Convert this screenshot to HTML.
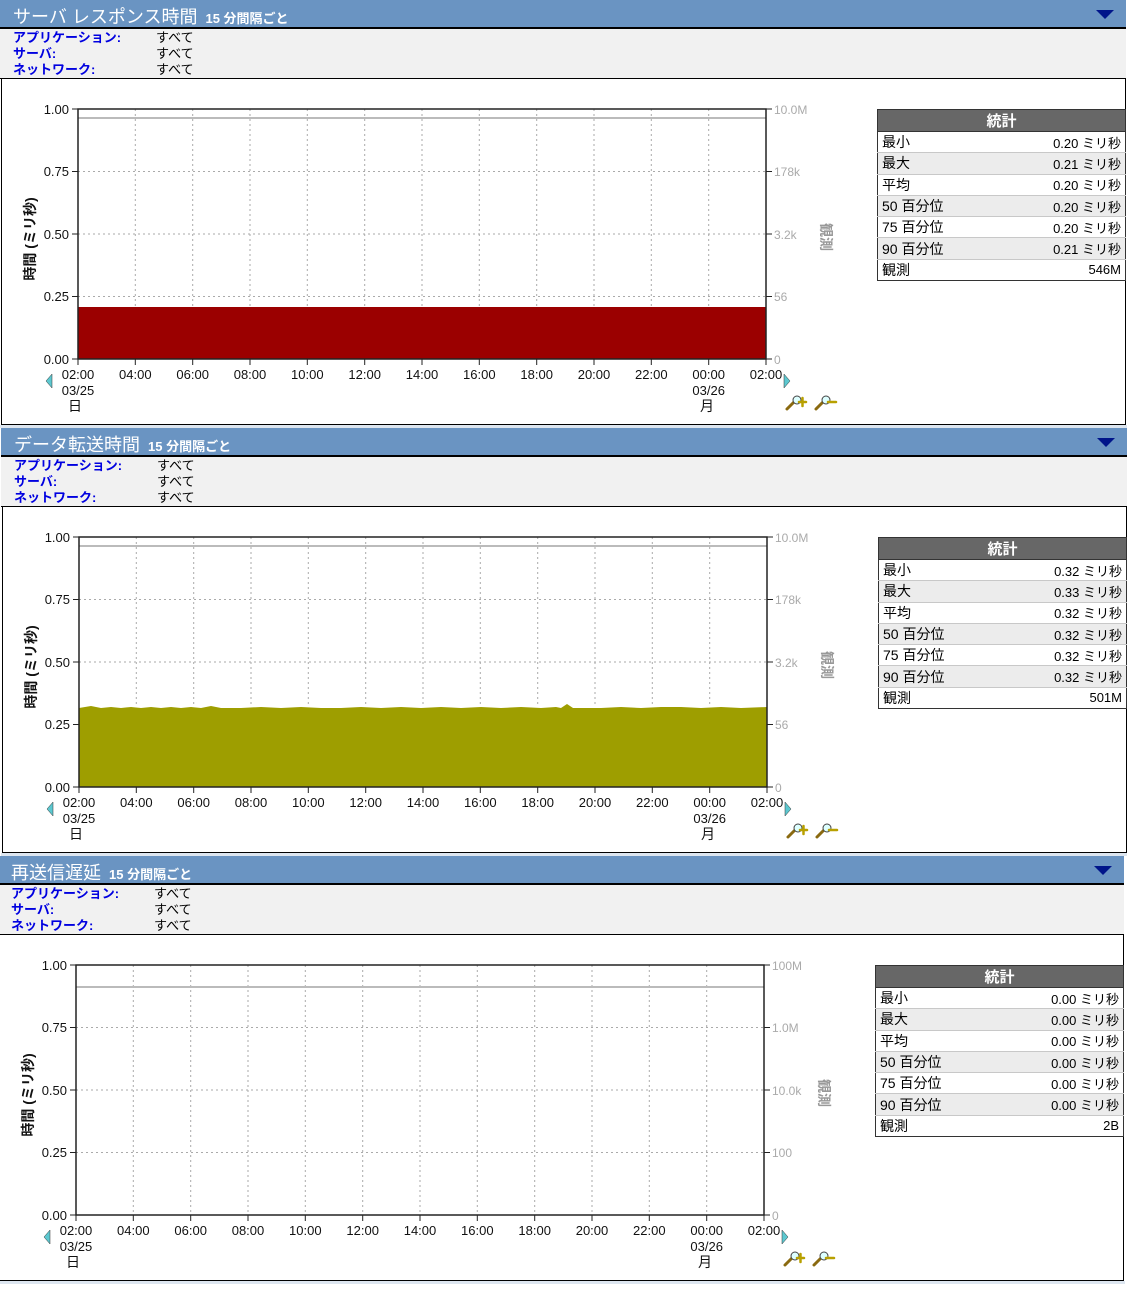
<!DOCTYPE html>
<html><head><meta charset="utf-8">
<style>
*{margin:0;padding:0;box-sizing:border-box}
body{width:1127px;height:1291px;background:#fff;position:relative;overflow:hidden;font-family:"Liberation Sans","Noto Sans CJK JP",sans-serif}
.p{position:absolute;width:1126px;height:427px}
.hd{position:absolute;left:0;top:0;width:1126px;height:29px;background:#6a94c2;border-bottom:2px solid #000;color:#fff}
.hd .t{position:absolute;left:13px;top:3px;font-size:18px}
.hd .s{font-size:13px;font-weight:bold;margin-left:8px}
.hd .a{position:absolute;right:12px;top:10px;width:0;height:0;border-left:9px solid transparent;border-right:9px solid transparent;border-top:9px solid #00158a}
.inf{position:absolute;left:0;top:29px;width:1126px;height:50px;background:#f1f1f1;border-bottom:1px solid #000;font-size:13px;line-height:16px;padding-top:1px}
.inf div{position:relative;height:16px}
.inf b{position:absolute;left:13px;color:#0000e0;font-weight:bold}
.inf span{position:absolute;left:156px;color:#000}
.ch{position:absolute;left:1px;top:79px;width:1125px;height:346px;border:1px solid #000;border-top:none;background:#fff}
.gap{position:absolute;left:0;top:425px;width:1127px;height:3px;background:#dde6f0}
svg{position:absolute;left:0;top:0}
.st{position:absolute;left:877px;top:109px;width:249px;border:1px solid #333;font-size:14px;border-collapse:collapse}
.st th{background:#676767;color:#fff;height:22px;font-size:15px;border-bottom:1px solid #333}
.st td{height:21.3px;padding:0 4px;border-top:1px solid #c8c8c8}
.st tr:nth-child(odd) td{background:#ececec}
.st td:last-child{text-align:right;font-size:13px}
</style></head><body>

<!-- PANEL 1 -->
<div class="p" style="left:0;top:0">
<div class="hd"><div class="t">サーバ レスポンス時間<span class="s">15 分間隔ごと</span></div><div class="a"></div></div>
<div class="inf"><div><b>アプリケーション:</b><span>すべて</span></div><div><b>サーバ:</b><span>すべて</span></div><div><b>ネットワーク:</b><span>すべて</span></div></div>
<div class="ch"></div><div class="gap"></div>
<svg width="1127" height="427" font-family="Liberation Sans, Noto Sans CJK JP, sans-serif" font-size="13">
<rect x="78" y="307" width="688" height="52" fill="#9b0000"/>
<g stroke="#aaa" stroke-dasharray="2,3"><line x1="78" y1="171.5" x2="766" y2="171.5"/><line x1="78" y1="234" x2="766" y2="234"/><line x1="78" y1="296.5" x2="766" y2="296.5"/>
<line x1="135.3" y1="109" x2="135.3" y2="307"/><line x1="192.7" y1="109" x2="192.7" y2="307"/><line x1="250" y1="109" x2="250" y2="307"/><line x1="307.3" y1="109" x2="307.3" y2="307"/><line x1="364.7" y1="109" x2="364.7" y2="307"/><line x1="422" y1="109" x2="422" y2="307"/><line x1="479.3" y1="109" x2="479.3" y2="307"/><line x1="536.7" y1="109" x2="536.7" y2="307"/><line x1="594" y1="109" x2="594" y2="307"/><line x1="651.3" y1="109" x2="651.3" y2="307"/><line x1="708.7" y1="109" x2="708.7" y2="307"/></g>
<line x1="78" y1="118" x2="766" y2="118" stroke="#bbb" stroke-width="2"/>
<rect x="78" y="109" width="688" height="250" fill="none" stroke="#222" stroke-width="1.5"/>
<g stroke="#222"><line x1="72" y1="109" x2="78" y2="109"/><line x1="72" y1="171.5" x2="78" y2="171.5"/><line x1="72" y1="234" x2="78" y2="234"/><line x1="72" y1="296.5" x2="78" y2="296.5"/><line x1="72" y1="359" x2="78" y2="359"/>
<line x1="78" y1="359" x2="78" y2="365"/><line x1="135.3" y1="359" x2="135.3" y2="365"/><line x1="192.7" y1="359" x2="192.7" y2="365"/><line x1="250" y1="359" x2="250" y2="365"/><line x1="307.3" y1="359" x2="307.3" y2="365"/><line x1="364.7" y1="359" x2="364.7" y2="365"/><line x1="422" y1="359" x2="422" y2="365"/><line x1="479.3" y1="359" x2="479.3" y2="365"/><line x1="536.7" y1="359" x2="536.7" y2="365"/><line x1="594" y1="359" x2="594" y2="365"/><line x1="651.3" y1="359" x2="651.3" y2="365"/><line x1="708.7" y1="359" x2="708.7" y2="365"/><line x1="766" y1="359" x2="766" y2="365"/>
<line x1="766" y1="109" x2="772" y2="109"/><line x1="766" y1="171.5" x2="772" y2="171.5"/><line x1="766" y1="234" x2="772" y2="234"/><line x1="766" y1="296.5" x2="772" y2="296.5"/><line x1="766" y1="359" x2="772" y2="359"/></g>
<g text-anchor="end" fill="#111"><text x="69" y="114">1.00</text><text x="69" y="176">0.75</text><text x="69" y="239">0.50</text><text x="69" y="301">0.25</text><text x="69" y="364">0.00</text></g>
<g fill="#aaa" font-size="12"><text x="774" y="114">10.0M</text><text x="774" y="176">178k</text><text x="774" y="239">3.2k</text><text x="774" y="301">56</text><text x="774" y="364">0</text></g>
<g text-anchor="middle" fill="#111"><text x="78" y="379">02:00</text><text x="135.3" y="379">04:00</text><text x="192.7" y="379">06:00</text><text x="250" y="379">08:00</text><text x="307.3" y="379">10:00</text><text x="364.7" y="379">12:00</text><text x="422" y="379">14:00</text><text x="479.3" y="379">16:00</text><text x="536.7" y="379">18:00</text><text x="594" y="379">20:00</text><text x="651.3" y="379">22:00</text><text x="708.7" y="379">00:00</text><text x="766" y="379">02:00</text>
<text x="78" y="395">03/25</text><text x="708.7" y="395">03/26</text><text x="75" y="411" font-size="14">日</text><text x="707" y="411" font-size="14">月</text></g>
<polygon points="52,374 46,381 52,388" fill="#5cc8d0" stroke="#333" stroke-width=".5"/><polygon points="784,374 790,381 784,388" fill="#5cc8d0" stroke="#333" stroke-width=".5"/>
<g stroke-width="3" stroke-linecap="round"><line x1="787" y1="409" x2="794" y2="402" stroke="#8a6a10"/><circle cx="797" cy="400" r="4" fill="#dff" stroke="#444" stroke-width="1"/><path d="M799 402h7M802.5 398v8" stroke="#b8a000" stroke-width="2.5"/>
<line x1="816" y1="409" x2="823" y2="402" stroke="#8a6a10"/><circle cx="826" cy="400" r="4" fill="#dff" stroke="#444" stroke-width="1"/><path d="M828 402h8" stroke="#b8a000" stroke-width="2.5"/></g>
<text transform="translate(35,239) rotate(-90)" text-anchor="middle" font-weight="bold" font-size="14" fill="#111">時間 (ミリ秒)</text>
<text transform="translate(821,237) rotate(90)" text-anchor="middle" font-weight="bold" font-size="14" fill="#999">観測</text>
</svg>
<table class="st"><tr><th colspan="2">統計</th></tr>
<tr><td>最小</td><td>0.20 ミリ秒</td></tr><tr><td>最大</td><td>0.21 ミリ秒</td></tr><tr><td>平均</td><td>0.20 ミリ秒</td></tr><tr><td>50 百分位</td><td>0.20 ミリ秒</td></tr><tr><td>75 百分位</td><td>0.20 ミリ秒</td></tr><tr><td>90 百分位</td><td>0.21 ミリ秒</td></tr><tr><td>観測</td><td>546M</td></tr></table>
</div>

<!-- PANEL 2 -->
<div class="p" style="left:1px;top:428px">
<div class="hd"><div class="t">データ転送時間<span class="s">15 分間隔ごと</span></div><div class="a"></div></div>
<div class="inf"><div><b>アプリケーション:</b><span>すべて</span></div><div><b>サーバ:</b><span>すべて</span></div><div><b>ネットワーク:</b><span>すべて</span></div></div>
<div class="ch"></div><div class="gap"></div>
<svg width="1127" height="427" font-family="Liberation Sans, Noto Sans CJK JP, sans-serif" font-size="13">
<polygon points="78,359 78,280 90,278 100,280 110,279 120,280 130,279 140,280 150,279 160,280 170,279 180,280 190,279 200,280 210,278 220,280 240,280 260,279 280,280 300,279 320,280 340,280 360,279 380,280 400,279 420,280 440,279 460,280 480,279 500,280 520,279 540,280 555,279 560,280 566,276 572,280 600,280 620,279 640,280 660,279 680,279 700,280 720,279 740,280 766,279 766,359" fill="#9e9e00"/>
<g stroke="#aaa" stroke-dasharray="2,3"><line x1="78" y1="171.5" x2="766" y2="171.5"/><line x1="78" y1="234" x2="766" y2="234"/>
<line x1="135.3" y1="109" x2="135.3" y2="279"/><line x1="192.7" y1="109" x2="192.7" y2="279"/><line x1="250" y1="109" x2="250" y2="279"/><line x1="307.3" y1="109" x2="307.3" y2="279"/><line x1="364.7" y1="109" x2="364.7" y2="279"/><line x1="422" y1="109" x2="422" y2="279"/><line x1="479.3" y1="109" x2="479.3" y2="279"/><line x1="536.7" y1="109" x2="536.7" y2="279"/><line x1="594" y1="109" x2="594" y2="279"/><line x1="651.3" y1="109" x2="651.3" y2="279"/><line x1="708.7" y1="109" x2="708.7" y2="279"/></g>
<line x1="78" y1="118" x2="766" y2="118" stroke="#bbb" stroke-width="2"/>
<rect x="78" y="109" width="688" height="250" fill="none" stroke="#222" stroke-width="1.5"/>
<g stroke="#222"><line x1="72" y1="109" x2="78" y2="109"/><line x1="72" y1="171.5" x2="78" y2="171.5"/><line x1="72" y1="234" x2="78" y2="234"/><line x1="72" y1="296.5" x2="78" y2="296.5"/><line x1="72" y1="359" x2="78" y2="359"/>
<line x1="78" y1="359" x2="78" y2="365"/><line x1="135.3" y1="359" x2="135.3" y2="365"/><line x1="192.7" y1="359" x2="192.7" y2="365"/><line x1="250" y1="359" x2="250" y2="365"/><line x1="307.3" y1="359" x2="307.3" y2="365"/><line x1="364.7" y1="359" x2="364.7" y2="365"/><line x1="422" y1="359" x2="422" y2="365"/><line x1="479.3" y1="359" x2="479.3" y2="365"/><line x1="536.7" y1="359" x2="536.7" y2="365"/><line x1="594" y1="359" x2="594" y2="365"/><line x1="651.3" y1="359" x2="651.3" y2="365"/><line x1="708.7" y1="359" x2="708.7" y2="365"/><line x1="766" y1="359" x2="766" y2="365"/>
<line x1="766" y1="109" x2="772" y2="109"/><line x1="766" y1="171.5" x2="772" y2="171.5"/><line x1="766" y1="234" x2="772" y2="234"/><line x1="766" y1="296.5" x2="772" y2="296.5"/><line x1="766" y1="359" x2="772" y2="359"/></g>
<g text-anchor="end" fill="#111"><text x="69" y="114">1.00</text><text x="69" y="176">0.75</text><text x="69" y="239">0.50</text><text x="69" y="301">0.25</text><text x="69" y="364">0.00</text></g>
<g fill="#aaa" font-size="12"><text x="774" y="114">10.0M</text><text x="774" y="176">178k</text><text x="774" y="239">3.2k</text><text x="774" y="301">56</text><text x="774" y="364">0</text></g>
<g text-anchor="middle" fill="#111"><text x="78" y="379">02:00</text><text x="135.3" y="379">04:00</text><text x="192.7" y="379">06:00</text><text x="250" y="379">08:00</text><text x="307.3" y="379">10:00</text><text x="364.7" y="379">12:00</text><text x="422" y="379">14:00</text><text x="479.3" y="379">16:00</text><text x="536.7" y="379">18:00</text><text x="594" y="379">20:00</text><text x="651.3" y="379">22:00</text><text x="708.7" y="379">00:00</text><text x="766" y="379">02:00</text>
<text x="78" y="395">03/25</text><text x="708.7" y="395">03/26</text><text x="75" y="411" font-size="14">日</text><text x="707" y="411" font-size="14">月</text></g>
<polygon points="52,374 46,381 52,388" fill="#5cc8d0" stroke="#333" stroke-width=".5"/><polygon points="784,374 790,381 784,388" fill="#5cc8d0" stroke="#333" stroke-width=".5"/>
<g stroke-width="3" stroke-linecap="round"><line x1="787" y1="409" x2="794" y2="402" stroke="#8a6a10"/><circle cx="797" cy="400" r="4" fill="#dff" stroke="#444" stroke-width="1"/><path d="M799 402h7M802.5 398v8" stroke="#b8a000" stroke-width="2.5"/>
<line x1="816" y1="409" x2="823" y2="402" stroke="#8a6a10"/><circle cx="826" cy="400" r="4" fill="#dff" stroke="#444" stroke-width="1"/><path d="M828 402h8" stroke="#b8a000" stroke-width="2.5"/></g>
<text transform="translate(35,239) rotate(-90)" text-anchor="middle" font-weight="bold" font-size="14" fill="#111">時間 (ミリ秒)</text>
<text transform="translate(821,237) rotate(90)" text-anchor="middle" font-weight="bold" font-size="14" fill="#999">観測</text>
</svg>
<table class="st"><tr><th colspan="2">統計</th></tr>
<tr><td>最小</td><td>0.32 ミリ秒</td></tr><tr><td>最大</td><td>0.33 ミリ秒</td></tr><tr><td>平均</td><td>0.32 ミリ秒</td></tr><tr><td>50 百分位</td><td>0.32 ミリ秒</td></tr><tr><td>75 百分位</td><td>0.32 ミリ秒</td></tr><tr><td>90 百分位</td><td>0.32 ミリ秒</td></tr><tr><td>観測</td><td>501M</td></tr></table>
</div>

<!-- PANEL 3 -->
<div class="p" style="left:-2px;top:856px">
<div class="hd"><div class="t">再送信遅延<span class="s">15 分間隔ごと</span></div><div class="a"></div></div>
<div class="inf"><div><b>アプリケーション:</b><span>すべて</span></div><div><b>サーバ:</b><span>すべて</span></div><div><b>ネットワーク:</b><span>すべて</span></div></div>
<div class="ch"></div><div class="gap"></div>
<svg width="1127" height="427" font-family="Liberation Sans, Noto Sans CJK JP, sans-serif" font-size="13">
<g stroke="#aaa" stroke-dasharray="2,3"><line x1="78" y1="171.5" x2="766" y2="171.5"/><line x1="78" y1="234" x2="766" y2="234"/><line x1="78" y1="296.5" x2="766" y2="296.5"/>
<line x1="135.3" y1="109" x2="135.3" y2="359"/><line x1="192.7" y1="109" x2="192.7" y2="359"/><line x1="250" y1="109" x2="250" y2="359"/><line x1="307.3" y1="109" x2="307.3" y2="359"/><line x1="364.7" y1="109" x2="364.7" y2="359"/><line x1="422" y1="109" x2="422" y2="359"/><line x1="479.3" y1="109" x2="479.3" y2="359"/><line x1="536.7" y1="109" x2="536.7" y2="359"/><line x1="594" y1="109" x2="594" y2="359"/><line x1="651.3" y1="109" x2="651.3" y2="359"/><line x1="708.7" y1="109" x2="708.7" y2="359"/></g>
<line x1="78" y1="131" x2="766" y2="131" stroke="#bbb" stroke-width="2"/>
<rect x="78" y="109" width="688" height="250" fill="none" stroke="#222" stroke-width="1.5"/>
<g stroke="#222"><line x1="72" y1="109" x2="78" y2="109"/><line x1="72" y1="171.5" x2="78" y2="171.5"/><line x1="72" y1="234" x2="78" y2="234"/><line x1="72" y1="296.5" x2="78" y2="296.5"/><line x1="72" y1="359" x2="78" y2="359"/>
<line x1="78" y1="359" x2="78" y2="365"/><line x1="135.3" y1="359" x2="135.3" y2="365"/><line x1="192.7" y1="359" x2="192.7" y2="365"/><line x1="250" y1="359" x2="250" y2="365"/><line x1="307.3" y1="359" x2="307.3" y2="365"/><line x1="364.7" y1="359" x2="364.7" y2="365"/><line x1="422" y1="359" x2="422" y2="365"/><line x1="479.3" y1="359" x2="479.3" y2="365"/><line x1="536.7" y1="359" x2="536.7" y2="365"/><line x1="594" y1="359" x2="594" y2="365"/><line x1="651.3" y1="359" x2="651.3" y2="365"/><line x1="708.7" y1="359" x2="708.7" y2="365"/><line x1="766" y1="359" x2="766" y2="365"/>
<line x1="766" y1="109" x2="772" y2="109"/><line x1="766" y1="171.5" x2="772" y2="171.5"/><line x1="766" y1="234" x2="772" y2="234"/><line x1="766" y1="296.5" x2="772" y2="296.5"/><line x1="766" y1="359" x2="772" y2="359"/></g>
<g text-anchor="end" fill="#111"><text x="69" y="114">1.00</text><text x="69" y="176">0.75</text><text x="69" y="239">0.50</text><text x="69" y="301">0.25</text><text x="69" y="364">0.00</text></g>
<g fill="#aaa" font-size="12"><text x="774" y="114">100M</text><text x="774" y="176">1.0M</text><text x="774" y="239">10.0k</text><text x="774" y="301">100</text><text x="774" y="364">0</text></g>
<g text-anchor="middle" fill="#111"><text x="78" y="379">02:00</text><text x="135.3" y="379">04:00</text><text x="192.7" y="379">06:00</text><text x="250" y="379">08:00</text><text x="307.3" y="379">10:00</text><text x="364.7" y="379">12:00</text><text x="422" y="379">14:00</text><text x="479.3" y="379">16:00</text><text x="536.7" y="379">18:00</text><text x="594" y="379">20:00</text><text x="651.3" y="379">22:00</text><text x="708.7" y="379">00:00</text><text x="766" y="379">02:00</text>
<text x="78" y="395">03/25</text><text x="708.7" y="395">03/26</text><text x="75" y="411" font-size="14">日</text><text x="707" y="411" font-size="14">月</text></g>
<polygon points="52,374 46,381 52,388" fill="#5cc8d0" stroke="#333" stroke-width=".5"/><polygon points="784,374 790,381 784,388" fill="#5cc8d0" stroke="#333" stroke-width=".5"/>
<g stroke-width="3" stroke-linecap="round"><line x1="787" y1="409" x2="794" y2="402" stroke="#8a6a10"/><circle cx="797" cy="400" r="4" fill="#dff" stroke="#444" stroke-width="1"/><path d="M799 402h7M802.5 398v8" stroke="#b8a000" stroke-width="2.5"/>
<line x1="816" y1="409" x2="823" y2="402" stroke="#8a6a10"/><circle cx="826" cy="400" r="4" fill="#dff" stroke="#444" stroke-width="1"/><path d="M828 402h8" stroke="#b8a000" stroke-width="2.5"/></g>
<text transform="translate(35,239) rotate(-90)" text-anchor="middle" font-weight="bold" font-size="14" fill="#111">時間 (ミリ秒)</text>
<text transform="translate(821,237) rotate(90)" text-anchor="middle" font-weight="bold" font-size="14" fill="#999">観測</text>
</svg>
<table class="st"><tr><th colspan="2">統計</th></tr>
<tr><td>最小</td><td>0.00 ミリ秒</td></tr><tr><td>最大</td><td>0.00 ミリ秒</td></tr><tr><td>平均</td><td>0.00 ミリ秒</td></tr><tr><td>50 百分位</td><td>0.00 ミリ秒</td></tr><tr><td>75 百分位</td><td>0.00 ミリ秒</td></tr><tr><td>90 百分位</td><td>0.00 ミリ秒</td></tr><tr><td>観測</td><td>2B</td></tr></table>
</div>
</body></html>
